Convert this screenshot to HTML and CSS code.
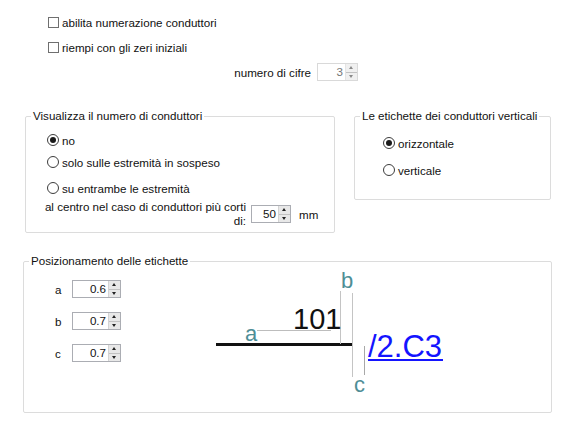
FILE: index.html
```html
<!DOCTYPE html>
<html>
<head>
    <title>Numerazione conduttori</title>
    <link rel="stylesheet" href="styles.css">
</head>
<body>
    <div class="options">
        <label class="check-row"><span class="check"></span>abilita numerazione conduttori</label>
        <label class="check-row second"><span class="check"></span>riempi con gli zeri iniziali</label>
        <div class="digits-row">
            <span class="digits-label">numero di cifre</span>
            <span class="spin disabled"><span class="spin-val">3</span><span class="spin-btns"><span class="up"></span><span class="dn"></span></span></span>
        </div>
    </div>

    <div class="groups">
        <fieldset class="group group-show">
            <legend>Visualizza il numero di conduttori</legend>
            <div class="group-body">
                <label class="radio-row"><span class="radio checked"></span>no</label>
                <label class="radio-row r2"><span class="radio"></span>solo sulle estremità in sospeso</label>
                <label class="radio-row r3"><span class="radio"></span>su entrambe le estremità</label>
                <div class="center-row">
                    <span class="center-label">al centro nel caso di conduttori più corti<br>di:</span>
                    <span class="spin spin-mm"><span class="spin-val">50</span><span class="spin-btns"><span class="up"></span><span class="dn"></span></span></span>
                    <span class="unit">mm</span>
                </div>
            </div>
        </fieldset>

        <fieldset class="group group-vert">
            <legend>Le etichette dei conduttori verticali</legend>
            <div class="group-body">
                <label class="radio-row"><span class="radio checked"></span>orizzontale</label>
                <label class="radio-row r2b"><span class="radio"></span>verticale</label>
            </div>
        </fieldset>
    </div>

    <fieldset class="group group-pos">
        <legend>Posizionamento delle etichette</legend>
        <div class="pos-body">
            <div class="pos-fields">
                <div class="pos-row"><span class="pos-name">a</span><span class="spin"><span class="spin-val">0.6</span><span class="spin-btns"><span class="up"></span><span class="dn"></span></span></span></div>
                <div class="pos-row"><span class="pos-name">b</span><span class="spin"><span class="spin-val">0.7</span><span class="spin-btns"><span class="up"></span><span class="dn"></span></span></span></div>
                <div class="pos-row"><span class="pos-name">c</span><span class="spin"><span class="spin-val">0.7</span><span class="spin-btns"><span class="up"></span><span class="dn"></span></span></span></div>
            </div>
            <svg class="preview" width="240" height="130" viewBox="0 0 240 130">
                <line x1="7" y1="76.5" x2="144" y2="76.5" stroke="#111" stroke-width="3"/>
                <line x1="48" y1="62.5" x2="122" y2="62.5" stroke="#bdbdbd" stroke-width="1"/>
                <line x1="131.5" y1="23" x2="131.5" y2="76" stroke="#c4c4c4" stroke-width="1"/>
                <line x1="143.5" y1="25" x2="143.5" y2="109" stroke="#c4c4c4" stroke-width="1"/>
                <line x1="155.5" y1="78" x2="155.5" y2="107" stroke="#a8a8a8" stroke-width="1"/>
                <text class="tag" x="36" y="73">a</text>
                <text class="tag" x="132" y="20">b</text>
                <text class="tag" x="145" y="124">c</text>
                <text class="num" x="84" y="60.5">101</text>
                <text class="ref" x="159" y="89">/2.C3</text>
                <line x1="159" y1="92" x2="234" y2="92" stroke="#1414ff" stroke-width="2"/>
            </svg>
        </div>
    </fieldset>
</body>
</html>
```

FILE: styles.css
```css
body {
    margin: 0;
    padding: 0;
    font-family: 'Liberation Sans', Arial, sans-serif;
    font-size: 11.6px;
    color: #111;
    background: #fff;
    width: 582px;
    height: 441px;
    overflow: hidden;
}

.options {
    padding-top: 14px;
    width: 358px;
}

.check-row {
    display: flex;
    align-items: center;
    height: 16px;
    margin-left: 48px;
}

.check-row.second {
    margin-top: 9px;
}

.check {
    width: 11px;
    height: 11px;
    box-sizing: border-box;
    border: 1px solid #6f6f6f;
    background: #fff;
    margin-right: 3px;
}

.digits-row {
    display: flex;
    align-items: center;
    justify-content: flex-end;
    margin-top: 8px;
    height: 18px;
}

.digits-label {
    margin-right: 6px;
}

/* spin box */
.spin {
    display: inline-flex;
    width: 49px;
    height: 18px;
    box-sizing: border-box;
    border: 1px solid #abadb3;
    background: #fff;
}

.spin-val {
    flex: 1;
    text-align: right;
    line-height: 16px;
    padding-right: 2px;
}

.spin-btns {
    width: 11px;
    display: flex;
    flex-direction: column;
    background: #e8e8e8;
    border-left: 1px solid #d4d4d4;
}

.spin-btns span {
    flex: 1;
    position: relative;
}

.spin-btns .up {
    border-bottom: 1px solid #c2c2c2;
}

.spin-btns span::after {
    content: '';
    position: absolute;
    left: 3px;
    top: 2px;
    border-left: 2.5px solid transparent;
    border-right: 2.5px solid transparent;
}

.spin-btns .up::after {
    border-bottom: 3px solid #222;
}

.spin-btns .dn::after {
    border-top: 3px solid #222;
    top: 2px;
}

.spin.disabled {
    width: 41px;
    border-color: #d9d9d9;
    color: #777;
}

.spin.disabled .spin-btns {
    background: #f0f0f0;
    border-left-color: #e4e4e4;
}

.spin.disabled .spin-btns span::after {
    border-bottom-color: #8a8a8a;
    border-top-color: #8a8a8a;
}

/* group boxes */
.groups {
    display: flex;
    align-items: flex-start;
    margin-top: 28px;
}

.group {
    margin: 0;
    padding: 0;
    border: 1px solid #dcdcdc;
    border-radius: 2px;
    box-sizing: border-box;
}

.group legend {
    margin-left: 5px;
    padding: 0 2px;
    line-height: 14px;
}

.group-show {
    margin-left: 25px;
    width: 310px;
    height: 124px;
}

.group-show .group-body {
    padding: 9px 0 0 21px;
}

.group-vert {
    margin-left: 19px;
    width: 197px;
    height: 91px;
}

.group-vert .group-body {
    padding: 12px 0 0 28px;
}

.radio-row {
    display: flex;
    align-items: center;
    height: 16px;
}

.radio-row.r2 {
    margin-top: 6px;
}

.radio-row.r3 {
    margin-top: 10px;
}

.radio-row.r2b {
    margin-top: 11px;
}

.radio {
    width: 12px;
    height: 12px;
    box-sizing: border-box;
    border: 1px solid #3c3c3c;
    border-radius: 50%;
    margin-right: 3px;
    display: flex;
    align-items: center;
    justify-content: center;
}

.radio.checked::after {
    content: '';
    width: 6px;
    height: 6px;
    border-radius: 50%;
    background: #1a1a1a;
}

.center-row {
    display: flex;
    align-items: center;
    margin-top: 4px;
    margin-left: -3px;
}

.center-label {
    width: 202px;
    text-align: right;
    line-height: 14px;
}

.spin-mm {
    width: 40px;
    margin-left: 5px;
}

.unit {
    margin-left: 8px;
}

.group-pos {
    margin: 21px 0 0 23px;
    width: 529px;
    height: 159px;
}

.pos-body {
    display: flex;
    align-items: flex-start;
}

.pos-fields {
    padding: 12px 0 0 31px;
}

.pos-row {
    display: flex;
    align-items: center;
    height: 18px;
    margin-bottom: 14px;
}

.pos-name {
    width: 17px;
}

.preview {
    margin-left: 88px;
    display: block;
}

.preview .tag {
    font-family: 'Liberation Sans', Arial, sans-serif;
    font-size: 22px;
    fill: #4e8e96;
}

.preview .num {
    font-family: 'Liberation Sans', Arial, sans-serif;
    font-size: 29px;
    fill: #111;
}

.preview .ref {
    font-family: 'Liberation Sans', Arial, sans-serif;
    font-size: 31px;
    fill: #1414ff;
}
```
